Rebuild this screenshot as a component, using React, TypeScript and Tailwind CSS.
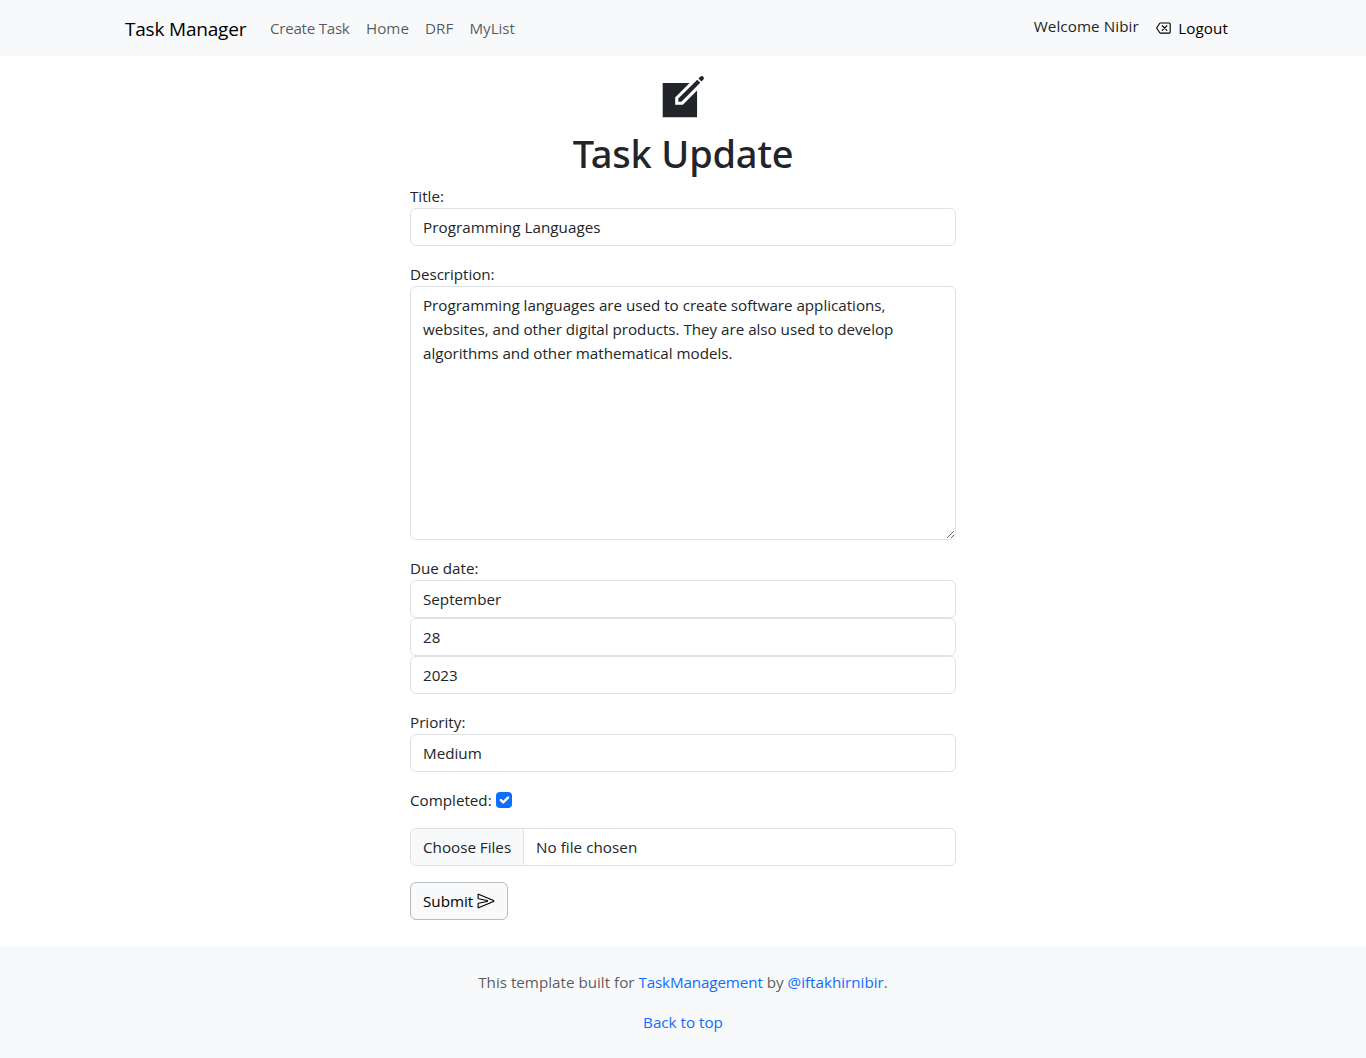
import type { ReactNode } from "react";
import { IoCreateSharp, IoSendOutline, IoBackspaceOutline } from "react-icons/io5";

const control =
  "block h-[38px] w-full appearance-none rounded-md border border-[#dee2e6] bg-white px-3 leading-6 text-[#212529] outline-none";

function Field({ label, children }: { label: string; children: ReactNode }) {
  return (
    <div className="mb-4">
      <label className="block h-6 leading-6">{label}</label>
      {children}
    </div>
  );
}

function Select({ value }: { value: string }) {
  return (
    <select className={control} defaultValue={value}>
      <option>{value}</option>
    </select>
  );
}

function Navbar() {
  return (
    <nav className="h-14 bg-[#f8f9fa]">
      <div className="mx-auto flex h-full w-[1140px] items-center px-3">
        <a href="#" className="mt-0.5 mr-4 w-[121px] whitespace-nowrap text-[19px] leading-[30px] tracking-[-0.2px] text-black">
          Task Manager
        </a>
        <div className="flex text-[#212529]/75">
          <a href="#" className="w-[96px] whitespace-nowrap pl-2 tracking-[-0.28px]">Create Task</a>
          <a href="#" className="w-[59px] pl-2">Home</a>
          <a href="#" className="w-[44.5px] pl-2">DRF</a>
          <a href="#" className="px-2 tracking-[-0.05px]">MyList</a>
        </div>
        <div className="ml-auto mr-[13px] flex items-center">
          <span className="mb-1 mr-[16.5px] tracking-[0.08px]">Welcome Nibir</span>
          <a href="#" className="flex items-center text-black">
            <IoBackspaceOutline className="mr-[5px] size-[18px]" />
            <span className="tracking-[0.1px]">Logout</span>
          </a>
        </div>
      </div>
    </nav>
  );
}

export default function App() {
  return (
    <div className="min-h-[1058px] bg-white font-['Open_Sans',sans-serif] text-[15.2px] leading-6 text-[#212529]">
      <Navbar />
      <main className="mx-auto h-[890px] w-[546px] pt-4">
        <div className="flex flex-col items-center">
          <IoCreateSharp className="size-[50px]" />
          <h1 className="my-[7px] h-12 font-['Noto_Sans',sans-serif] text-[38px] leading-[48px] font-medium tracking-[-0.2px]">
            Task Update
          </h1>
        </div>
        <form>
          <Field label="Title:">
            <input className={`${control} tracking-[0.05px]`} defaultValue="Programming Languages" />
          </Field>
          <div className="mb-4">
            <label className="block h-6 leading-6 tracking-[-0.05px]">Description:</label>
            <textarea
              className="block h-[254px] w-full rounded-md border border-[#dee2e6] px-3 py-1.5 leading-6 tracking-[-0.02px] outline-none"
              defaultValue="Programming languages are used to create software applications, websites, and other digital products. They are also used to develop algorithms and other mathematical models."
            />
          </div>
          <Field label="Due date:">
            <Select value="September" />
            <Select value="28" />
            <Select value="2023" />
          </Field>
          <Field label="Priority:">
            <Select value="Medium" />
          </Field>
          <div className="mb-4 flex h-6 items-center">
            <span className="w-[86px]">Completed:</span>
            <span className="flex size-4 items-center justify-center rounded bg-[#0d6efd]">
              <svg viewBox="0 0 20 20" className="size-4" fill="none" stroke="white" strokeWidth="3" strokeLinecap="round" strokeLinejoin="round">
                <path d="m6 10 3 3 6-6" />
              </svg>
            </span>
          </div>
          <div className="mb-4 flex h-[38px] items-center overflow-hidden rounded-md border border-[#dee2e6]">
            <span className="flex h-full w-[113px] items-center border-r border-[#dee2e6] bg-[#f8f9fa] pl-3">Choose Files</span>
            <span className="pl-3 tracking-[0.05px]">No file chosen</span>
          </div>
          <button type="button" className="flex h-[38px] w-[98px] items-center rounded-md border border-[#babbbc] bg-[#f8f9fa] pl-3 text-black">
            Submit
            <IoSendOutline className="ml-1 size-[18px]" />
          </button>
        </form>
      </main>
      <footer className="h-28 bg-[#f8f9fa] pt-6 text-center text-[#212529]/75">
        <p className="mb-4">
          This template built for <a href="#" className="tracking-[-0.12px] text-[#0d6efd]">TaskManagement</a> by{" "}
          <a href="#" className="text-[#0d6efd]">@iftakhirnibir</a>.
        </p>
        <p>
          <a href="#" className="text-[#0d6efd]">Back to top</a>
        </p>
      </footer>
    </div>
  );
}
